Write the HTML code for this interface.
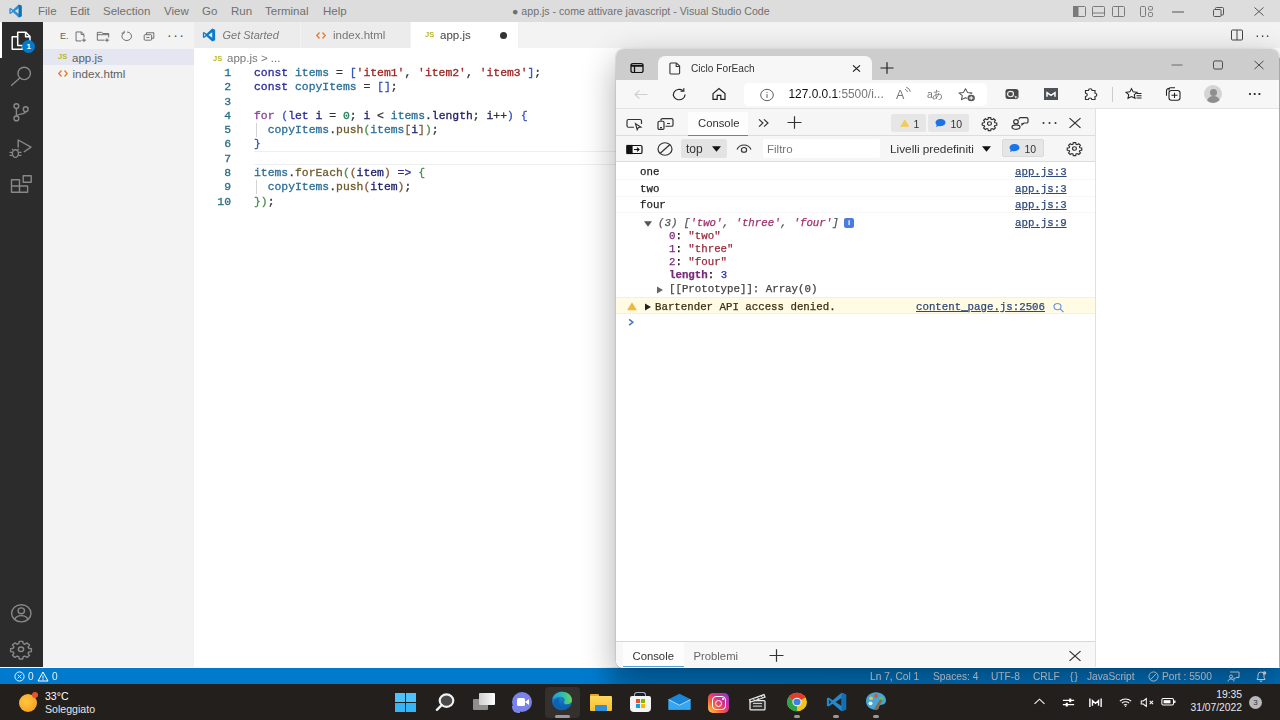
<!DOCTYPE html>
<html><head><meta charset="utf-8"><title>app.js - Visual Studio Code</title>
<style>
*{box-sizing:border-box;margin:0;padding:0}
html,body{width:1280px;height:720px;overflow:hidden;background:#fff;font-family:"Liberation Sans",sans-serif;}
.abs{position:absolute}
svg{position:absolute;overflow:visible}
/* ---------- VS Code ---------- */
#titlebar{left:0;top:0;width:1280px;height:22px;background:#dddddd;color:#707070;font-size:11.5px;line-height:22px}
#titlebar span{position:absolute;top:0;white-space:nowrap}
#activity{left:0;top:22px;width:43px;height:645px;background:#2c2c2c}
#sidebar{left:43px;top:22px;width:151px;height:645px;background:#f3f3f3}
#tabs{left:194px;top:22px;width:1086px;height:26px;background:#f3f3f3}
.tab{position:absolute;top:0;height:26px;background:#ececec;color:#777;font-size:11.5px;line-height:26px;white-space:nowrap}
#editor{left:194px;top:48px;width:1086px;height:619px;background:#fff}
#status{left:0;top:667.500px;width:1280px;height:16.500px;background:#007acc;color:#e4eef8;font-size:10.200px;line-height:17px}
#status span{position:absolute;top:0;white-space:nowrap}
#taskbar{left:0;top:684px;width:1280px;height:36px;background:#221f1d}
.code{position:absolute;left:254px;font-family:"Liberation Mono",monospace;font-size:11.4px;line-height:14.28px;white-space:pre;color:#333;-webkit-text-stroke:0.300px currentColor}
.ln{position:absolute;font-family:"Liberation Mono",monospace;font-size:11.4px;line-height:14.28px;color:#2a6f85;-webkit-text-stroke:0.300px currentColor;text-align:right;width:20px;left:211px}
.k{color:#2a2a9c}.v{color:#2b6f98}.s{color:#9c2424}.f{color:#6e5a2a}.n{color:#23805c}.vv{color:#22226e}.p{color:#8f3f9a}.b1{color:#3355bb}.b2{color:#4a8f4a}.b3{color:#8a5a38}

/* ---------- Edge ---------- */
#edge{left:616px;top:49px;width:663px;height:618.500px;border-radius:8px 8px 0 8px;background:#fff;overflow:hidden}
#edgeshadow{left:616px;top:49px;width:663px;height:618.500px;border-radius:8px;box-shadow:0 0 2px rgba(0,0,0,.3),0 12px 34px rgba(0,0,0,.33)}
#edge svg{transform:scaleY(.9)}
#taskbar svg{transform:scaleY(.92)}
#edge .t{position:absolute;white-space:nowrap}
.mono{font-family:"Liberation Mono",monospace;font-size:10.750px;line-height:13px;white-space:pre;position:absolute;-webkit-text-stroke:0.250px currentColor}
.lnk{color:#2f4a78;text-decoration:underline}
.row{position:absolute;left:0;width:479px;border-bottom:1px solid #f6f6f6}
</style></head>
<body>
<div id="wrap" class="abs" style="left:0;top:0;width:1280px;height:720px;overflow:hidden;filter:blur(0.450px)">
<div id="titlebar" class="abs">
 <svg style="left:8px;top:4px" width="15" height="14" viewBox="0 0 24 24"><path fill="#2a8fd6" d="M17.500 1L7.800 10 3.500 6.700 1.500 7.700v8.600l2 1 4.300-3.300 9.700 9 5-2V3zM3.800 14.500v-5l2.500 2.500zM17.500 16.800L11 12l6.500-4.800z"/><path fill="#1070b3" d="M17.500 1l5 2v18l-5 2z"/></svg>
 <span style="left:38px">File</span><span style="left:70px">Edit</span><span style="left:103px">Selection</span><span style="left:164px">View</span><span style="left:202px">Go</span><span style="left:231px">Run</span><span style="left:265px">Terminal</span><span style="left:323px">Help</span>
 <span style="left:512px;font-size:10.600px">● app.js - come attivare javascript - Visual Studio Code</span>
<svg style="left:1073px;top:6px" width="13" height="11" viewBox="0 0 13 11" fill="none" stroke="#7a7a7a" stroke-width="1"><rect x="0.500" y="0.500" width="12" height="10" rx="1"/><rect x="0.500" y="0.500" width="4.500" height="10" fill="#7a7a7a"/></svg>
 <svg style="left:1092px;top:6px" width="13" height="11" viewBox="0 0 13 11" fill="none" stroke="#7a7a7a" stroke-width="1"><rect x="0.500" y="0.500" width="12" height="10" rx="1"/><path d="M0.500 7h12"/></svg>
 <svg style="left:1112px;top:6px" width="13" height="11" viewBox="0 0 13 11" fill="none" stroke="#7a7a7a" stroke-width="1"><rect x="0.500" y="0.500" width="12" height="10" rx="1"/><path d="M6.500 0.500v10"/></svg>
 <svg style="left:1140px;top:6px" width="13" height="11" viewBox="0 0 13 11" fill="none" stroke="#7a7a7a" stroke-width="1"><rect x="0.500" y="0.500" width="5" height="10" rx="1"/><rect x="8.500" y="0.500" width="4" height="3.500" rx="1"/><rect x="8.500" y="6.500" width="4" height="4" rx="1"/></svg>
 <svg style="left:1172px;top:11px" width="12" height="2" viewBox="0 0 12 2" stroke="#555" stroke-width="1"><path d="M0 1h12"/></svg>
 <svg style="left:1213px;top:7px" width="11" height="10" viewBox="0 0 11 10" fill="none" stroke="#555" stroke-width="1"><rect x="0.500" y="2.500" width="7.500" height="7" rx="1"/><path d="M2.500 2.500V1.500a1 1 0 0 1 1-1H9.500a1 1 0 0 1 1 1V7a1 1 0 0 1-1 1H8"/></svg>
 <svg style="left:1254px;top:7px" width="10" height="9" viewBox="0 0 10 9" stroke="#555" stroke-width="1"><path d="M0.500 0.500l9 8M9.500 0.500l-9 8"/></svg>
</div>
<div id="activity" class="abs">
 <div class="abs" style="left:0;top:0;width:2px;height:36px;background:#fff"></div>
 <!-- explorer -->
 <svg style="left:0;top:0" width="44" height="36" viewBox="0 0 44 36" fill="none" stroke="#fff" stroke-width="1.500" stroke-linejoin="round"><path d="M17.700 10.300H25.800L30 14.500V23.500H17.700z"/><path d="M25.600 10.500V14.700H29.800"/><path d="M17.700 14.800H12.200V27.300H22.500V23.500"/></svg>
 <div class="abs" style="left:22.200px;top:17.600px;width:13px;height:13px;border-radius:7px;background:#007acc;color:#fff;font-size:8px;line-height:13px;text-align:center;font-weight:bold">1</div>
 <svg style="left:0;top:0" width="44" height="645" viewBox="0 22 44 645" fill="none" stroke="#888" stroke-width="1.400" stroke-linejoin="round">
  <!-- search --><circle cx="24.200" cy="73.400" r="6.200"/><path d="M19.800 77.900L11.600 85.200" stroke-linecap="round"/>
  <!-- scm --><circle cx="16.400" cy="106.100" r="2.400"/><circle cx="16.400" cy="118.400" r="2.400"/><circle cx="25.700" cy="109.200" r="2.400"/><path d="M16.400 108.500V116M25.700 111.600c0 3.400-8.800 1.600-9.300 4.800"/>
  <!-- debug --><path d="M18.200 147.500V140L31 147.200 23.800 152"/><ellipse cx="15.400" cy="153.600" rx="3" ry="3.800"/><path d="M12.400 152.300H9.500M12.400 155.300H9.500M18.400 152.300H21.500M18.400 155.300H21.500M13.400 150.400L12 149M17.400 150.400L18.800 149" stroke-width="1.200"/>
  <!-- ext --><path d="M11.500 179.800H19.500V186H27.600V192.200H11.500zM11.500 186H19.500M19.500 186V192.200"/><rect x="23.200" y="175.800" width="8" height="6.400"/>
  <!-- account --><ellipse cx="21.300" cy="613.300" rx="9.700" ry="8.600"/><ellipse cx="21.300" cy="610.800" rx="3.200" ry="2.900"/><path d="M14.600 619.400c1.400-2.900 3.900-3.800 6.700-3.800s5.300.9 6.700 3.800"/>
  <!-- gear --><g transform="translate(21 649.300) scale(1.020 0.860) translate(-12 -12)"><circle cx="12" cy="12" r="2.600" vector-effect="non-scaling-stroke"/><path d="M10.300 2.800h3.400l.5 2.600 1.600.7 2.200-1.500 2.400 2.400-1.500 2.200.7 1.600 2.600.5v3.400l-2.600.5-.7 1.600 1.500 2.200-2.400 2.400-2.200-1.500-1.600.7-.5 2.600h-3.400l-.5-2.600-1.600-.7-2.200 1.500-2.400-2.400 1.500-2.200-.7-1.600-2.600-.5v-3.400l2.600-.5.7-1.600-1.500-2.200 2.400-2.400 2.200 1.500 1.600-.7z" vector-effect="non-scaling-stroke"/></g>
 </svg>
</div>
<div id="sidebar" class="abs">
 <span class="abs" style="left:17px;top:8px;font-size:9px;color:#616161;line-height:12px">E.</span>
 <svg style="left:30px;top:8px" width="14" height="12.500" preserveAspectRatio="none" viewBox="0 0 16 16" fill="none" stroke="#555" stroke-width="1"><path d="M9.500 14H3.500V2.500h6l3 3v4"/><path d="M9.300 2.700v3h3M12.500 10.500v5M10 13h5"/></svg>
 <svg style="left:53px;top:8px" width="14" height="12.500" preserveAspectRatio="none" viewBox="0 0 16 16" fill="none" stroke="#555" stroke-width="1"><path d="M9.500 13H1.500V3h5l1.500 1.500h6.500v5M1.500 6h13"/><path d="M12.500 10.500v5M10 13h5"/></svg>
 <svg style="left:77px;top:8px" width="14" height="12.500" preserveAspectRatio="none" viewBox="0 0 16 16" fill="none" stroke="#555" stroke-width="1"><path d="M4.500 3.500A5.500 5.500 0 1 0 8 2.500"/><path d="M4.800 1v3h-3"/></svg>
 <svg style="left:99px;top:8px" width="14" height="12.500" preserveAspectRatio="none" viewBox="0 0 16 16" fill="none" stroke="#555" stroke-width="1"><rect x="2.500" y="6" width="8.500" height="7" rx="1"/><path d="M5 6V3.500h8.500v7H11M5 9.500h3.500"/></svg>
 <span class="abs" style="left:124px;top:2.500px;font-size:14px;color:#555;letter-spacing:1.500px;line-height:20px">···</span>
 <div class="abs" style="left:0;top:27px;width:151px;height:16px;background:#e4e6f1"></div>
 <span class="abs" style="left:15px;top:30px;font-size:7.5px;font-weight:bold;color:#b8b72f;line-height:10px">JS</span>
 <span class="abs" style="left:29px;top:28px;font-size:11.5px;color:#616161;line-height:16px">app.js</span>
 <svg style="left:15px;top:48px" width="10" height="7" viewBox="0 0 10 7" fill="none" stroke="#e37933" stroke-width="1.300"><path d="M3.500 0.500L0.800 3.500l2.700 3M6.500 0.500l2.700 3-2.700 3"/></svg>
 <span class="abs" style="left:29.500px;top:43.700px;font-size:11.600px;color:#616161;line-height:16px">index.html</span>
</div>
<div id="tabs" class="abs">
 <div class="tab" style="left:0;width:107px;border-right:1px solid #f3f3f3"><svg style="left:8px;top:6px" width="14" height="14" viewBox="0 0 24 24"><path fill="#0b7bd0" d="M17.500 1L7.800 10 3.500 6.700 1.500 7.700v8.600l2 1 4.300-3.300 9.700 9 5-2V3zM3.800 14.500v-5l2.500 2.500zM17.500 16.800L11 12l6.500-4.800z"/></svg><span style="position:absolute;left:28.500px;font-style:italic;font-size:11px">Get Started</span></div>
 <div class="tab" style="left:107px;width:110px;border-right:1px solid #f3f3f3"><svg style="left:15px;top:10px" width="10" height="7" viewBox="0 0 10 7" fill="none" stroke="#e37933" stroke-width="1.300"><path d="M3.500 0.500L0.800 3.500l2.700 3M6.500 0.500l2.700 3-2.700 3"/></svg><span style="position:absolute;left:32px">index.html</span></div>
 <div class="tab" style="left:217px;width:107px;background:#fff;color:#444"><span style="position:absolute;left:14px;font-size:7.5px;font-weight:bold;color:#b8b72f">JS</span><span style="position:absolute;left:29px">app.js</span><div class="abs" style="left:89px;top:10px;width:7px;height:7px;border-radius:4px;background:#333"></div></div>
 <svg style="left:1035px;top:5px" width="16" height="16" viewBox="0 0 16 16" fill="none" stroke="#444" stroke-width="1"><rect x="2.500" y="3" width="11" height="10" rx="1"/><path d="M8 3v10"/></svg>
 <span class="abs" style="left:1061px;top:3px;font-size:14px;color:#444;letter-spacing:0.5px;line-height:20px">···</span>
</div>
<div id="editor" class="abs">
 <span class="abs" style="left:19px;top:6px;font-size:7.5px;font-weight:bold;color:#b8b72f;line-height:10px">JS</span><span class="abs" style="left:33px;top:2px;font-size:11.5px;color:#767676;line-height:16px">app.js &gt; ...</span>
 <div class="abs" style="left:60px;top:103px;width:1026px;height:14px;border-top:1px solid #eee;border-bottom:1px solid #eee"></div>
 <div class="abs" style="left:62px;top:74.5px;width:1px;height:14px;background:#d3d3d3"></div><div class="abs" style="left:62px;top:131.500px;width:1px;height:14px;background:#d3d3d3"></div>
 <div class="ln" style="left:17px;top:18.00px">1</div><div class="code" style="left:60px;top:18.00px"><span class="k">const</span> <span class="v">items</span> = <span class="b1">[</span><span class="s">'item1'</span>, <span class="s">'item2'</span>, <span class="s">'item3'</span><span class="b1">]</span>;</div>
 <div class="ln" style="left:17px;top:32.28px">2</div><div class="code" style="left:60px;top:32.28px"><span class="k">const</span> <span class="v">copyItems</span> = <span class="b1">[]</span>;</div>
 <div class="ln" style="left:17px;top:46.56px">3</div><div class="code" style="left:60px;top:46.56px"></div>
 <div class="ln" style="left:17px;top:60.84px">4</div><div class="code" style="left:60px;top:60.84px"><span class="p">for</span> <span class="b1">(</span><span class="k">let</span> <span class="vv">i</span> = <span class="n">0</span>; <span class="vv">i</span> &lt; <span class="v">items</span>.<span class="vv">length</span>; <span class="vv">i</span>++<span class="b1">)</span> <span class="b1">{</span></div>
 <div class="ln" style="left:17px;top:75.12px">5</div><div class="code" style="left:60px;top:75.12px">  <span class="v">copyItems</span>.<span class="f">push</span><span class="b2">(</span><span class="v">items</span><span class="b3">[</span><span class="vv">i</span><span class="b3">]</span><span class="b2">)</span>;</div>
 <div class="ln" style="left:17px;top:89.40px">6</div><div class="code" style="left:60px;top:89.40px"><span class="b1">}</span></div>
 <div class="ln" style="left:17px;top:103.68px">7</div><div class="code" style="left:60px;top:103.68px"></div>
 <div class="ln" style="left:17px;top:117.96px">8</div><div class="code" style="left:60px;top:117.96px"><span class="v">items</span>.<span class="f">forEach</span><span class="b2">(</span><span class="b3">(</span><span class="vv">item</span><span class="b3">)</span> <span class="k">=&gt;</span> <span class="b2">{</span></div>
 <div class="ln" style="left:17px;top:132.24px">9</div><div class="code" style="left:60px;top:132.24px">  <span class="v">copyItems</span>.<span class="f">push</span><span class="b3">(</span><span class="vv">item</span><span class="b3">)</span>;</div>
 <div class="ln" style="left:17px;top:146.52px">10</div><div class="code" style="left:60px;top:146.52px"><span class="b2">})</span>;</div>
</div>
<div id="status" class="abs">
 <svg style="left:13.500px;top:3px" width="11" height="11" viewBox="0 0 12 12" fill="none" stroke="#fff" stroke-width="1"><circle cx="6" cy="6" r="5"/><path d="M4 4l4 4M8 4l-4 4"/></svg>
 <span style="left:28px">0</span>
 <svg style="left:37px;top:3px" width="12" height="11" viewBox="0 0 12 11" fill="none" stroke="#fff" stroke-width="1"><path d="M6 1L11 10H1z"/><path d="M6 4.500v3M6 8.200v1"/></svg>
 <span style="left:52px">0</span>
 <span style="left:870px">Ln 7, Col 1</span><span style="left:933px">Spaces: 4</span><span style="left:991px">UTF-8</span><span style="left:1033px">CRLF</span><span style="left:1070px;letter-spacing:1px">{}</span><span style="left:1087px">JavaScript</span>
 <svg style="left:1148px;top:3px" width="11" height="11" viewBox="0 0 12 12" fill="none" stroke="#fff" stroke-width="1"><circle cx="6" cy="6" r="5"/><path d="M2.500 9.500l7-7"/></svg>
 <span style="left:1162px">Port : 5500</span>
 <svg style="left:1227px;top:3px" width="13" height="11" viewBox="0 0 13 11" fill="none" stroke="#fff" stroke-width="1"><path d="M3 1h9v5.500H9l-2 2v-2"/><circle cx="4" cy="5.500" r="1.500"/><path d="M1 10.500c.3-2 1.500-2.500 3-2.500s2.700.5 3 2.500"/></svg>
 <svg style="left:1255px;top:3px" width="12" height="11" viewBox="0 0 12 11" fill="none" stroke="#fff" stroke-width="1"><path d="M2 8.500V8l1-1.500V4a3 3 0 0 1 6 0v2.500L10 8v.5zM5 9.500a1 1 0 0 0 2 0"/><circle cx="9.500" cy="2" r="1.800" fill="#fff" stroke="none"/></svg>
</div>
<div id="edgeshadow" class="abs"></div>
<div class="abs" style="left:1279px;top:58px;width:1px;height:609px;background:#a8a8a8"></div>
<div class="abs" style="left:596px;top:667px;width:684px;height:17px;background:linear-gradient(90deg,rgba(0,0,0,0),rgba(0,0,0,.10) 24px,rgba(0,0,0,.12))"></div>
<div id="edge" class="abs">
 <!-- tab strip -->
 <div class="abs" style="left:0;top:0;width:663px;height:31px;background:#cdcdcd"></div>
 <svg style="left:14px;top:13px" width="14" height="12" viewBox="0 0 14 12" fill="none" stroke="#111" stroke-width="1.300"><rect x="1" y="1" width="12" height="10" rx="2"/><path d="M1 3.500h12" stroke-width="2.400"/><path d="M4.500 4v7"/></svg>
 <div class="abs" style="left:42px;top:7px;width:214px;height:25px;background:#f7f7f7;border-radius:7px 7px 0 0"></div>
 <svg style="left:53px;top:12px" width="12" height="15" viewBox="0 0 13 15" fill="none" stroke="#333" stroke-width="1.200"><path d="M2 1h6l3.500 3.500V13a1 1 0 0 1-1 1H2a1 1 0 0 1-1-1V2a1 1 0 0 1 1-1z"/><path d="M7.800 1.200V5h3.700"/></svg>
 <span class="t" style="left:75px;top:13px;font-size:10.150px;color:#333;line-height:14px">Ciclo ForEach</span>
 <svg style="left:236px;top:15px" width="9" height="9" viewBox="0 0 9 9" stroke="#222" stroke-width="1.200"><path d="M1 1l7 7M8 1l-7 7"/></svg>
 <svg style="left:264px;top:12px" width="14" height="14" viewBox="0 0 14 14" stroke="#222" stroke-width="1.200"><path d="M7 0.500v13M0.500 7h13"/></svg>
 <svg style="left:555px;top:15px" width="12" height="2" viewBox="0 0 12 2" stroke="#666" stroke-width="1"><path d="M0.500 1h11"/></svg>
 <svg style="left:597px;top:11px" width="10" height="10" viewBox="0 0 10 10" fill="none" stroke="#444" stroke-width="1"><rect x="0.500" y="0.500" width="9" height="9" rx="1.500"/></svg>
 <svg style="left:638px;top:11px" width="10" height="10" viewBox="0 0 10 10" stroke="#444" stroke-width="1"><path d="M0.500 0.500l9 9M9.500 0.500l-9 9"/></svg>
 <!-- toolbar -->
 <div class="abs" style="left:0;top:31px;width:663px;height:29px;background:#f7f7f7;border-bottom:1px solid #e3e3e3"></div>
 <svg style="left:18px;top:40px" width="14" height="11" viewBox="0 0 14 11" fill="none" stroke="#cfcfcf" stroke-width="1.200"><path d="M13.500 5.500H1M5.500 1L1 5.500 5.500 10"/></svg>
 <svg style="left:56px;top:38px" width="15" height="15" viewBox="0 0 15 15" fill="none" stroke="#222" stroke-width="1.200"><path d="M13 7.500A5.800 5.800 0 1 1 11 3.200"/><path d="M11.800 0.500v3.300H8.500" /></svg>
 <svg style="left:96px;top:38px" width="14" height="14" viewBox="0 0 14 14" fill="none" stroke="#222" stroke-width="1.200"><path d="M1 6.500L7 1l6 5.500V13H8.800V8.500H5.200V13H1z"/></svg>
 <div class="abs" style="left:128px;top:34px;width:243px;height:23px;background:#fff;border-radius:5px"></div>
 <svg style="left:144px;top:39px" width="14" height="14" viewBox="0 0 14 14" fill="none" stroke="#555" stroke-width="1"><circle cx="7" cy="7" r="6.300"/><path d="M7 6v4.300M7 3.500v1.200"/></svg>
 <span class="t" style="left:172.500px;top:38px;font-size:11.900px;color:#111;line-height:15px">127.0.0.1<span style="color:#777">:5500/i...</span></span>
 <span class="t" style="left:280px;top:37.500px;font-size:12.500px;color:#777;line-height:16px">A</span><svg style="left:288px;top:37px" width="7" height="9" viewBox="0 0 7 9" fill="none" stroke="#777" stroke-width="1"><path d="M1 3.200Q3.300 4 3.600 6.300M2.200 0.800Q6 2.200 6.300 6"/></svg>
 <span class="t" style="left:311px;top:38px;font-size:10.500px;color:#777;line-height:15px;letter-spacing:-0.500px">aあ</span>
 <svg style="left:342px;top:38px" width="18" height="16" viewBox="0 0 18 16" fill="none" stroke="#555" stroke-width="1.100" stroke-linejoin="round"><path d="M7.500 1l2 4.100 4.500.6-3.300 3.100.8 4.400L7.500 11.100 3.500 13.200l.8-4.400L1 5.700l4.500-.6z"/><circle cx="13.200" cy="11.300" r="4.300" fill="#fff" stroke="none"/><circle cx="13.200" cy="11.300" r="3.700" fill="#5a5a5a" stroke="none"/><path d="M13.200 9.300v4M11.200 11.300h4" stroke="#fff" stroke-width="1.100"/></svg>
 <!-- right toolbar icons -->
 <svg style="left:389px;top:39px" width="15" height="13" viewBox="0 0 15 13"><rect x="0.500" y="0.500" width="13" height="11" rx="2.500" fill="#4a4a4a"/><circle cx="5.500" cy="6" r="3" fill="none" stroke="#eee" stroke-width="1.200"/><path d="M9 7.500l4.500 1.800-2 .6-.6 2z" fill="#fff" stroke="#4a4a4a" stroke-width=".5"/></svg>
 <div class="abs" style="left:428px;top:39px;width:14px;height:12px;background:#4d5358"></div>
 <svg style="left:430px;top:42px" width="10" height="6" viewBox="0 0 10 6" fill="none" stroke="#fff" stroke-width="1.500"><path d="M1 6V1.500l4 3 4-3V6"/></svg>
 <svg style="left:467px;top:38px" width="15" height="15" viewBox="0 0 15 15" fill="none" stroke="#333" stroke-width="1.200"><path d="M5.500 3a1.800 1.800 0 0 1 3.600 0h2.900v3.200a1.800 1.800 0 0 1 0 3.600V13H8.800a1.700 1.700 0 0 0-3.400 0H2.500V9.700a1.800 1.800 0 0 0 0-3.600V3z"/></svg>
 <div class="abs" style="left:496px;top:38px;width:1px;height:15px;background:#ccc"></div>
 <svg style="left:509px;top:38px" width="17" height="14" viewBox="0 0 17 14" fill="none" stroke="#222" stroke-width="1.100"><path d="M6.500 1l1.700 3.600 3.900.5-2.800 2.700.7 3.900L6.500 9.800 3 11.700l.7-3.900L1 5.100l3.900-.5z"/><path d="M11.500 6.500h5M11.500 9h5M11.500 11.500h5"/></svg>
 <svg style="left:549px;top:37px" width="16" height="16" viewBox="0 0 16 16" fill="none" stroke="#222" stroke-width="1.100"><path d="M4 4V2.500A1.500 1.500 0 0 1 5.500 1H10"/><rect x="4" y="4" width="11" height="11" rx="2.500"/><path d="M1.500 10V4.500A3 3 0 0 1 4.500 1.500"/><path d="M9.500 6.500v6M6.500 9.500h6"/></svg>
 <div class="abs" style="left:588px;top:36px;width:18px;height:18px;border-radius:9px;background:#d4d4d4;overflow:hidden"><div class="abs" style="left:5.500px;top:3.500px;width:7px;height:7px;border-radius:4px;background:#8e8e8e"></div><div class="abs" style="left:2.500px;top:11px;width:13px;height:10px;border-radius:6px 6px 0 0;background:#8e8e8e"></div></div>
 <svg style="left:632px;top:43px" width="14" height="4" viewBox="0 0 14 4"><circle cx="2" cy="2" r="1.150" fill="#222"/><circle cx="6.700" cy="2" r="1.150" fill="#222"/><circle cx="11.400" cy="2" r="1.150" fill="#222"/></svg>
 <!-- devtools -->
 <div class="abs" style="left:0;top:60px;width:480px;height:558px;background:#fff;border-right:1px solid #e0e0e0"></div>
 <div class="abs" style="left:0;top:60px;width:479px;height:27px;background:#f6f6f6;border-bottom:1px solid #dcdcdc"></div>
 <div class="abs" style="left:0;top:87px;width:479px;height:26px;background:#f6f6f6;border-bottom:1px solid #dcdcdc"></div>
 <svg style="left:10px;top:69px" width="17" height="13" viewBox="0 0 17 13" fill="none" stroke="#333" stroke-width="1.200"><path d="M8 9.500H2.500A1.500 1.500 0 0 1 1 8V2.500A1.500 1.500 0 0 1 2.500 1H14a1.500 1.500 0 0 1 1.500 1.500V6"/><path d="M9.500 5.500l5.500 4-2.600.3-1.200 2.400z" fill="#fff"/></svg>
 <svg style="left:41px;top:68px" width="17" height="14" viewBox="0 0 17 14" fill="none" stroke="#333" stroke-width="1.200"><path d="M4 3.500V2.500A1.500 1.500 0 0 1 5.500 1H14.500A1.500 1.500 0 0 1 16 2.500V8A1.500 1.500 0 0 1 14.500 9.500H8.500"/><rect x="1" y="4" width="6" height="9" rx="1.300"/><path d="M10 6.500h3M3 11h2"/></svg>
 <div class="abs" style="left:72px;top:63px;width:60px;height:24px;background:#fdfdfd;border-bottom:1.500px solid #3b8edb"></div>
 <span class="t" style="left:82px;top:66px;font-size:11.300px;color:#333;line-height:16px">Console</span>
 <svg style="left:142px;top:69px" width="11" height="10" viewBox="0 0 11 10" fill="none" stroke="#333" stroke-width="1.200"><path d="M1 1l4 4-4 4M6 1l4 4-4 4"/></svg>
 <svg style="left:171px;top:66px" width="15" height="15" viewBox="0 0 15 15" stroke="#333" stroke-width="1.200"><path d="M7.500 0.500v14M0.500 7.500h14"/></svg>
 <!-- badges row1 -->
 <div class="abs" style="left:275px;top:65px;width:35px;height:18px;background:#e6e6e6;border-radius:2px"></div>
 <svg style="left:284px;top:70px" width="9.500" height="8.500" viewBox="0 0 11 10"><path d="M5.500 1L10 9H1z" fill="#f0cc5a" stroke="#f0cc5a" stroke-width="1.200" stroke-linejoin="round"/></svg>
 <span class="t" style="left:297.500px;top:67.500px;font-size:10.500px;color:#333;line-height:14px">1</span>
 <div class="abs" style="left:312px;top:65px;width:41px;height:18px;background:#e6e6e6;border-radius:2px"></div>
 <svg style="left:319px;top:69px" width="11" height="10" viewBox="0 0 11 10"><path d="M5.500 0.500c3 0 5 1.800 5 4s-2 4-5 4c-.7 0-1.300-.1-1.900-.3L1 9.500l.7-2.300C.9 6.500.5 5.500.5 4.500c0-2.200 2-4 5-4z" fill="#1a73e8"/></svg>
 <span class="t" style="left:334.500px;top:67.500px;font-size:10.500px;color:#333;line-height:14px">10</span>
 <svg style="left:365px;top:66px" width="17" height="17" viewBox="0 0 24 24" fill="none" stroke="#333" stroke-width="1.700"><circle cx="12" cy="12" r="2.800"/><path d="M10.300 2.800h3.400l.5 2.600 1.600.7 2.200-1.500 2.400 2.400-1.500 2.200.7 1.600 2.600.5v3.400l-2.600.5-.7 1.600 1.500 2.200-2.400 2.400-2.200-1.500-1.600.7-.5 2.600h-3.400l-.5-2.600-1.600-.7-2.200 1.500-2.400-2.400 1.500-2.200-.7-1.600-2.600-.5v-3.400l2.600-.5.7-1.600-1.500-2.200 2.400-2.400 2.200 1.500 1.600-.7z"/></svg>
 <svg style="left:395px;top:67px" width="18" height="15" viewBox="0 0 18 15" fill="none" stroke="#333" stroke-width="1.200"><path d="M8 3V2.500A1.500 1.500 0 0 1 9.500 1H15.500A1.500 1.500 0 0 1 17 2.500V5.500A1.500 1.500 0 0 1 15.500 7H13l-2 1.800V7"/><circle cx="5" cy="5.500" r="2.300"/><ellipse cx="5" cy="11.500" rx="4" ry="2.500"/></svg>
 <svg style="left:426px;top:72px" width="15" height="4" viewBox="0 0 15 4"><circle cx="1.500" cy="2" r="1" fill="#333"/><circle cx="7.500" cy="2" r="1" fill="#333"/><circle cx="13.500" cy="2" r="1" fill="#333"/></svg>
 <svg style="left:453px;top:68px" width="12" height="12" viewBox="0 0 12 12" stroke="#333" stroke-width="1.200"><path d="M0.500 0.500l11 11M11.500 0.500l-11 11"/></svg>
 <!-- row2 -->
 <svg style="left:10px;top:95px" width="17" height="11" viewBox="0 0 17 11" fill="none" stroke="#111" stroke-width="1.200"><rect x="1" y="1" width="15" height="9" rx="1.500"/><rect x="1" y="1" width="5" height="9" fill="#111"/><path d="M8 5.500h5M11 3.500l2 2-2 2"/></svg>
 <svg style="left:41px;top:92px" width="16" height="16" viewBox="0 0 16 16" fill="none" stroke="#333" stroke-width="1.200"><circle cx="8" cy="8" r="7"/><path d="M3 13L13 3"/></svg>
 <div class="abs" style="left:65px;top:90px;width:46px;height:19px;background:#e3e3e3;border-radius:2px"></div>
 <span class="t" style="left:70px;top:93px;font-size:12px;color:#333;line-height:15px">top</span>
 <svg style="left:96px;top:97px" width="9" height="6" viewBox="0 0 9 6"><path d="M0 0h9L4.500 6z" fill="#111"/></svg>
 <svg style="left:120px;top:94px" width="16" height="12" viewBox="0 0 16 12" fill="none" stroke="#333" stroke-width="1.200"><path d="M1 6.500C2.500 3 5 1.500 8 1.500s5.500 1.500 7 5"/><circle cx="8" cy="7" r="2.600"/></svg>
 <div class="abs" style="left:147px;top:90px;width:117px;height:19px;background:#fff;border-radius:2px"></div>
 <span class="t" style="left:151px;top:93px;font-size:11.500px;color:#767676;line-height:15px">Filtro</span>
 <span class="t" style="left:274px;top:92.700px;font-size:11.800px;color:#333;line-height:15px">Livelli predefiniti</span>
 <svg style="left:366px;top:97px" width="9" height="6" viewBox="0 0 9 6"><path d="M0 0h9L4.500 6z" fill="#111"/></svg>
 <div class="abs" style="left:386px;top:90px;width:42px;height:18px;background:#e6e6e6;border-radius:2px;border:1px solid #dadada"></div>
 <svg style="left:393px;top:94px" width="11" height="10" viewBox="0 0 11 10"><path d="M5.500 0.500c3 0 5 1.800 5 4s-2 4-5 4c-.7 0-1.300-.1-1.900-.3L1 9.500l.7-2.300C.9 6.500.5 5.500.5 4.500c0-2.200 2-4 5-4z" fill="#1a73e8"/></svg>
 <span class="t" style="left:408.500px;top:92.500px;font-size:10.500px;color:#333;line-height:14px">10</span>
 <svg style="left:450px;top:91px" width="17" height="17" viewBox="0 0 24 24" fill="none" stroke="#333" stroke-width="1.700"><circle cx="12" cy="12" r="2.800"/><path d="M10.300 2.800h3.400l.5 2.600 1.600.7 2.200-1.500 2.400 2.400-1.500 2.200.7 1.600 2.600.5v3.400l-2.600.5-.7 1.600 1.500 2.200-2.400 2.400-2.200-1.500-1.600.7-.5 2.600h-3.400l-.5-2.600-1.600-.7-2.200 1.500-2.400-2.400 1.500-2.200-.7-1.600-2.600-.5v-3.400l2.600-.5.7-1.600-1.500-2.200 2.400-2.400 2.200 1.500 1.600-.7z"/></svg>
 <!-- console messages -->
 <div class="row" style="top:113.8px;height:17px"></div><div class="row" style="top:130.8px;height:17px"></div><div class="row" style="top:147.8px;height:16px"></div>
 <span class="mono" style="left:24px;top:116.8px;color:#222">one</span><span class="mono lnk" style="left:399px;top:116.8px">app.js:3</span>
 <span class="mono" style="left:24px;top:133.8px;color:#222">two</span><span class="mono lnk" style="left:399px;top:133.8px">app.js:3</span>
 <span class="mono" style="left:24px;top:149.8px;color:#222">four</span><span class="mono lnk" style="left:399px;top:149.8px">app.js:3</span>
 <svg style="left:28px;top:171.8px" width="8" height="6" viewBox="0 0 8 6"><path d="M0 0h8L4 6z" fill="#555"/></svg>
 <span class="mono" style="left:42px;top:167.8px;font-style:italic;color:#555">(3) [<span style="color:#a0306a">'two'</span>, <span style="color:#a0306a">'three'</span>, <span style="color:#a0306a">'four'</span>]</span>
 <div class="abs" style="left:228px;top:168.8px;width:10px;height:10px;background:#4a7de0;border-radius:2px;color:#fff;font-size:8px;line-height:10px;text-align:center;font-weight:bold">i</div>
 <span class="mono lnk" style="left:399px;top:167.8px">app.js:9</span>
 <span class="mono" style="left:53px;top:180.8px"><span style="color:#7a2a7a">0</span>: <span style="color:#9a2a3a">"two"</span></span>
 <span class="mono" style="left:53px;top:193.8px"><span style="color:#7a2a7a">1</span>: <span style="color:#9a2a3a">"three"</span></span>
 <span class="mono" style="left:53px;top:206.8px"><span style="color:#7a2a7a">2</span>: <span style="color:#9a2a3a">"four"</span></span>
 <span class="mono" style="left:53px;top:220.3px"><span style="color:#7a2a7a;font-weight:bold">length</span>: <span style="color:#2a2aaa">3</span></span>
 <svg style="left:41px;top:236.8px" width="6" height="8" viewBox="0 0 6 8"><path d="M0 0v8L6 4z" fill="#666"/></svg>
 <span class="mono" style="left:53px;top:233.8px;color:#444">[[Prototype]]: Array(0)</span>
 <div class="abs" style="left:0;top:247.500px;width:479px;height:17.500px;background:#fffbe5;border-top:1.8px solid #fdf2c5;border-bottom:1px solid #fdf2c5"></div>
 <svg style="left:10.500px;top:253.300px" width="10" height="9" viewBox="0 0 11 10"><path d="M5.500 1L10 9H1z" fill="#f0b840" stroke="#f0b840" stroke-width="1.200" stroke-linejoin="round"/></svg>
 <svg style="left:29px;top:253.8px" width="6" height="8" viewBox="0 0 6 8"><path d="M0 0v8L6 4z" fill="#222"/></svg>
 <span class="mono" style="left:39px;top:251.8px;color:#3a2f14">Bartender API access denied.</span>
 <span class="mono lnk" style="left:300px;top:251.8px">content_page.js:2506</span>
 <svg style="left:437px;top:252.8px" width="11" height="11" viewBox="0 0 11 11" fill="none" stroke="#6a9ad8" stroke-width="1.200"><circle cx="4.500" cy="4.500" r="3.500"/><path d="M7.200 7.200l3.300 3.300"/></svg>
 <svg style="left:12px;top:269.300px" width="6.500" height="8.500" viewBox="0 0 6 8" fill="none" stroke="#4778c0" stroke-width="1.500"><path d="M1 1l3.500 3L1 7"/></svg>
 <!-- drawer -->
 <div class="abs" style="left:0;top:592px;width:479px;height:26px;background:#f7f7f7;border-top:1px solid #d8d8d8"></div>
 <div class="abs" style="left:7px;top:593px;width:61px;height:25px;background:#fdfdfd;border-bottom:1.500px solid #5a9fd8"></div>
 <span class="t" style="left:16.500px;top:599px;font-size:11.300px;color:#333;line-height:16px">Console</span>
 <span class="t" style="left:77.500px;top:599px;font-size:11.300px;color:#666;line-height:16px">Problemi</span>
 <svg style="left:153px;top:599px" width="15" height="15" viewBox="0 0 15 15" stroke="#333" stroke-width="1.200"><path d="M7.500 0.500v14M0.500 7.500h14"/></svg>
 <svg style="left:453px;top:601px" width="12" height="12" viewBox="0 0 12 12" stroke="#333" stroke-width="1.200"><path d="M0.500 0.500l11 11M11.500 0.500l-11 11"/></svg>
</div>
<div id="taskbar" class="abs">
 <!-- weather -->
 <div class="abs" style="left:19px;top:10px;width:18px;height:18px;border-radius:9px;background:radial-gradient(circle at 40% 40%,#ffc83d,#f7941d)"></div>
 <div class="abs" style="left:32px;top:8px;width:6px;height:6px;border-radius:3px;background:#e8532b"></div>
 <span class="abs" style="left:45px;top:6px;font-size:10.500px;color:#fff;line-height:12px">33°C</span>
 <span class="abs" style="left:45px;top:19px;font-size:10.600px;color:#e6e6e6;line-height:12px">Soleggiato</span>
 <!-- start -->
 <div class="abs" style="left:395px;top:9px;width:10px;height:9px;background:#4cc2ff"></div><div class="abs" style="left:406px;top:9px;width:10px;height:9px;background:#4cc2ff"></div>
 <div class="abs" style="left:395px;top:19px;width:10px;height:9px;background:#35b4f8"></div><div class="abs" style="left:406px;top:19px;width:10px;height:9px;background:#35b4f8"></div>
 <!-- search -->
 <svg style="left:434px;top:6px" width="24" height="24" viewBox="0 0 24 24" fill="none"><circle cx="12.500" cy="10.500" r="6.800" fill="#4a4a4a" stroke="#f2f2f2" stroke-width="2.200"/><path d="M7.500 15.500L3 20.500" stroke="#f2f2f2" stroke-width="2.600" stroke-linecap="round"/></svg>
 <!-- task view -->
 <div class="abs" style="left:473px;top:15px;width:15px;height:11px;background:#8e8e8e;border-radius:1px"></div>
 <div class="abs" style="left:479px;top:9px;width:16px;height:12px;background:linear-gradient(90deg,#cfcfcf,#fdfdfd);border-radius:1px"></div>
 <!-- chat -->
 <div class="abs" style="left:512px;top:8px;width:20px;height:20px;border-radius:10px;background:#7b83eb"></div>
 <div class="abs" style="left:512px;top:22px;width:8px;height:7px;background:#7b83eb;border-radius:0 0 0 6px"></div>
 <div class="abs" style="left:517px;top:14px;width:8px;height:8px;background:#fff;border-radius:1.500px"></div>
 <div class="abs" style="left:525px;top:15px;width:0;height:0;border-right:4px solid #fff;border-top:3px solid transparent;border-bottom:3px solid transparent"></div>
 <!-- edge (active) -->
 <div class="abs" style="left:545px;top:3px;width:35px;height:31px;border-radius:4px;background:#33302e"></div>
 <svg style="left:551px;top:6px" width="22" height="22" viewBox="0 0 22 22"><defs><linearGradient id="eg1" x1="0" y1="0" x2="1" y2="0"><stop offset="0" stop-color="#1b9de2"/><stop offset=".6" stop-color="#35c1a0"/><stop offset="1" stop-color="#6ad45a"/></linearGradient><linearGradient id="eg2" x1="0" y1="0" x2="0" y2="1"><stop offset="0" stop-color="#1e8fe0"/><stop offset="1" stop-color="#0c59a4"/></linearGradient></defs><circle cx="11" cy="11" r="10" fill="url(#eg2)"/><path d="M1.300 9C2.500 3.500 7 1 11 1c6 0 10 4.500 10 9 0 3-2.500 4.500-5 4.500-2 0-3-1-3-2 0-.8.800-1.200.8-2.500C13.800 8 12 6.500 9.500 6.500 5.500 6.500 2 9 1.300 9z" fill="url(#eg1)"/><path d="M8 12c0 4 3.500 7 7.500 6.500-2 2-5 2.800-8 1.800C4 19 2 15.500 2.500 12.500 3 10 5.500 8 8.500 8 8 9 8 10.500 8 12z" fill="#0d63b3"/></svg>
 <div class="abs" style="left:555px;top:31px;width:15px;height:3px;border-radius:1.500px;background:#9a9a9a"></div>
 <!-- explorer -->
 <div class="abs" style="left:590px;top:10px;width:9px;height:4px;background:#e8a820;border-radius:1px 1px 0 0"></div>
 <div class="abs" style="left:590px;top:12px;width:22px;height:15px;background:linear-gradient(#ffd75e,#f8bf2e);border-radius:1px"></div>
 <div class="abs" style="left:595px;top:21px;width:12px;height:6px;background:#2f8fd8;border-radius:1px 1px 0 0"></div>
 <!-- store -->
 <div class="abs" style="left:634px;top:8px;width:12px;height:6px;border:1.500px solid #9fb6c6;border-bottom:none;border-radius:3px 3px 0 0"></div>
 <div class="abs" style="left:630px;top:12px;width:21px;height:16px;background:#f4f4f4;border-radius:2px 2px 4px 4px"></div>
 <div class="abs" style="left:636px;top:15px;width:4px;height:4px;background:#f25022"></div><div class="abs" style="left:641px;top:15px;width:4px;height:4px;background:#7fba00"></div>
 <div class="abs" style="left:636px;top:20px;width:4px;height:4px;background:#00a4ef"></div><div class="abs" style="left:641px;top:20px;width:4px;height:4px;background:#ffb900"></div>
 <!-- mail -->
 <svg style="left:668px;top:8px" width="23" height="20" viewBox="0 0 23 20"><path d="M0.500 7L11.500 1l11 6v11.500H0.500z" fill="#1a86d9"/><path d="M0.500 8l11 6 11-6v10.500H0.500z" fill="#35a6f2"/><path d="M0.500 7.500l11 6 11-6" fill="none" stroke="#bfe3fb" stroke-width="1"/></svg>
 <!-- instagram -->
 <div class="abs" style="left:708px;top:9px;width:21px;height:20px;border-radius:5px;background:linear-gradient(45deg,#fdc645 5%,#f0603c 35%,#d6318f 60%,#8a3ac8 95%)"></div>
 <div class="abs" style="left:711.500px;top:12px;width:14px;height:14px;border-radius:4px;border:1.600px solid #fff"></div>
 <div class="abs" style="left:715px;top:15.500px;width:7px;height:7px;border-radius:4px;border:1.600px solid #fff"></div>
 <div class="abs" style="left:722px;top:13.800px;width:2px;height:2px;border-radius:1px;background:#fff"></div>
 <!-- clapper -->
 <svg style="left:747px;top:7px" width="22" height="22" viewBox="0 0 22 22" fill="none" stroke="#e8e8e8" stroke-width="1.300"><rect x="3" y="9.500" width="15" height="10" rx="1" fill="#2f2f2f"/><path d="M2.500 8.500L17 3l1 2.800L3.500 11z" fill="#2f2f2f"/><path d="M6 7.200l2 2.500M10 5.700l2 2.500M14 4.200l2 2.500M6 12.500h9M6 15.500h9" stroke-width="1"/></svg>
 <!-- chrome -->
 <svg style="left:786px;top:7px" width="22" height="22" viewBox="0 0 22 22"><circle cx="11" cy="11" r="10" fill="#f5c218"/><path d="M11 11L2.340 6A10 10 0 0 1 19.660 6z" fill="#e33b2e"/><path d="M11 11L2.340 6A10 10 0 0 0 11 21z" fill="#2fa24c"/><path d="M11 11h8.660" stroke="#f5c218"/><circle cx="11" cy="11" r="4.600" fill="#fff"/><circle cx="11" cy="11" r="3.600" fill="#3f7fe8"/></svg>
 <div class="abs" style="left:794px;top:31px;width:6px;height:3px;border-radius:1.500px;background:#9a9a9a"></div>
 <!-- vscode -->
 <svg style="left:825px;top:7px" width="23" height="22" viewBox="0 0 24 24"><path fill="#2489ca" d="M17.500 1L7.800 10 3.500 6.700 1.500 7.700v8.600l2 1 4.300-3.300 9.700 9 5-2V3zM3.800 14.500v-5l2.500 2.500zM17.500 16.800L11 12l6.500-4.800z"/><path fill="#1070b3" d="M17.500 1l5 2v18l-5 2z"/></svg>
 <div class="abs" style="left:833px;top:31px;width:6px;height:3px;border-radius:1.500px;background:#9a9a9a"></div>
 <!-- paint -->
 <svg style="left:865px;top:6px" width="22" height="22" viewBox="0 0 22 22"><path d="M11 1.500c6 0 10 4 10 9 0 3-2 4.500-4.500 4.500-1.500 0-2.500 1-2.500 2.500 0 2-1.500 3-3.500 3C5 20.500 1 16.500 1 11 1 5.500 5.500 1.500 11 1.500z" fill="#45a6d8"/><circle cx="6" cy="8" r="2" fill="#e8c23a"/><circle cx="11" cy="5.500" r="2" fill="#d9573a"/><circle cx="16" cy="8" r="2" fill="#6cc04a"/><circle cx="5.500" cy="13.500" r="2" fill="#f2f2f2"/><path d="M9 20l6-11 2.500 1.500L12 21z" fill="#8a6a4a"/></svg>
 <div class="abs" style="left:873px;top:31px;width:6px;height:3px;border-radius:1.500px;background:#9a9a9a"></div>
 <!-- tray -->
 <svg style="left:1033px;top:13px" width="13" height="9" viewBox="0 0 13 9" fill="none" stroke="#eee" stroke-width="1.200"><path d="M1.500 7l5-5 5 5"/></svg>
 <svg style="left:1062px;top:12.500px" width="13" height="11" preserveAspectRatio="none" viewBox="0 0 15 14" fill="none" stroke="#fff" stroke-width="1.800"><path d="M1 4h13M1 10h13"/><path d="M9.500 1.500v5M5.500 7.500v5" stroke-width="2.400"/></svg>
 <svg style="left:1089px;top:13.500px" width="13" height="9.500" preserveAspectRatio="none" viewBox="0 0 15 12" fill="none" stroke="#fff" stroke-width="1.600"><path d="M1 0v12M14 0v12M4 10V3l3.500 4L11 3v7"/></svg>
 <svg style="left:1118.500px;top:12.500px" width="13" height="10.500" viewBox="0 0 16 13" fill="none" stroke="#fff" stroke-width="1.300"><path d="M1 5a10 10 0 0 1 14 0M3.500 7.700a6.500 6.500 0 0 1 9 0M6 10.300a3 3 0 0 1 4 0"/><circle cx="8" cy="11.800" r="0.900" fill="#fff" stroke="none"/></svg>
 <svg style="left:1139.500px;top:12.500px" width="16" height="11" viewBox="0 0 18 13" fill="none" stroke="#fff" stroke-width="1.200"><path d="M1 4.500h2.500L7 1.500v10L3.500 8.500H1z"/><path d="M11 4.500l4 4M15 4.500l-4 4"/></svg>
 <svg style="left:1160.500px;top:13px" width="15.500" height="9.500" viewBox="0 0 18 11" fill="none" stroke="#fff" stroke-width="1.200"><rect x="1" y="1.500" width="13.500" height="8" rx="1.500"/><rect x="3" y="3.500" width="8" height="4" fill="#fff" stroke="none"/><path d="M16 4v3" stroke-width="1.600"/></svg>
 <span class="abs" style="left:1180px;top:5px;width:62px;text-align:right;font-size:10.300px;color:#e8e8e8;line-height:12px">19:35</span>
 <span class="abs" style="left:1180px;top:18px;width:62px;text-align:right;font-size:10.300px;color:#e8e8e8;line-height:12px">31/07/2022</span>
 <div class="abs" style="left:1249px;top:12px;width:13px;height:13px;border-radius:7px;background:#b9b9b9;color:#333;font-size:8px;line-height:13px;text-align:center">3</div>
</div>
<!--EDGE-->
</div>
</body></html>
